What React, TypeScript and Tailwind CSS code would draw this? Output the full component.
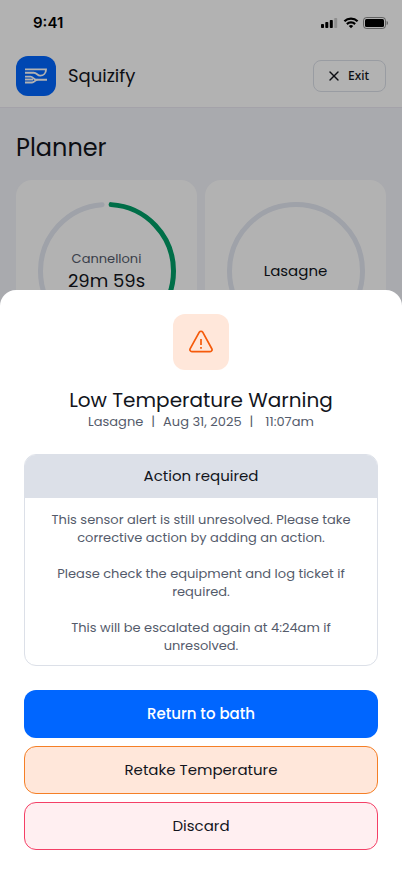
import { X } from "lucide-react";

const timers = [
  { name: "Cannelloni", remaining: "29m 59s", progress: 0.49 },
  { name: "Lasagne", remaining: null, progress: 0 },
];

const messages = [
  "This sensor alert is still unresolved. Please take corrective action by adding an action.",
  "Please check the equipment and log ticket if required.",
  "This will be escalated again at 4:24am if unresolved.",
];

export default function App() {
  return (
    <div className="min-h-screen bg-[#f3f4fa] font-[Poppins,Inter,'Noto_Sans',sans-serif] text-[#12151c]">
      <div className="border-b border-[#ebe8f2] bg-white">
        <StatusBar />
        <header className="flex h-[63px] items-center justify-between px-4">
          <div className="flex items-center gap-3">
            <div className="flex size-10 items-center justify-center rounded-xl bg-[#0066ff]">
              <Logo />
            </div>
            <span className="text-lg">Squizify</span>
          </div>
          <button type="button" className="flex h-8 items-center gap-0.5 rounded-lg border border-[#dce0e8] px-3 font-['Noto_Sans',sans-serif] text-xs font-medium">
            <X size={16} strokeWidth={2} />
            <span className="px-1">Exit</span>
          </button>
        </header>
      </div>

      <main className="px-4 pt-6">
        <h1 className="text-2xl leading-8">Planner</h1>
        <div className="mt-4 grid grid-cols-2 gap-2">
          {timers.map((timer) => (
            <TimerCard key={timer.name} {...timer} />
          ))}
        </div>
      </main>

      <div className="fixed inset-0 flex flex-col justify-end bg-black/30">
        <AlertSheet />
      </div>
    </div>
  );
}

function AlertSheet() {
  return (
    <section role="dialog" aria-labelledby="alert-title" className="flex flex-col gap-6 rounded-t-2xl bg-white p-6">
      <div className="flex flex-col items-center text-center">
        <div className="flex size-14 items-center justify-center rounded-xl bg-[#ffe7da]">
          <WarningIcon />
        </div>
        <h2 id="alert-title" className="mt-4 text-xl leading-7">Low Temperature Warning</h2>
        <p className="flex gap-2 text-[13px] leading-4 text-[#545b6b]">
          <span>Lasagne</span>
          <span>|</span>
          <span>Aug 31, 2025</span>
          <span>|</span>
          <span className="pl-1">11:07am</span>
        </p>
      </div>

      <div className="overflow-hidden rounded-xl border border-[#dce0e8] text-center">
        <h3 className="bg-[#dce0e8] pt-[7px] pb-[9px] text-[15px] leading-[27px]">Action required</h3>
        <div className="flex flex-col gap-[18px] px-5 pt-[13px] pb-[10px] text-[13px] leading-[18px] text-[#545b6b]">
          {messages.map((message) => (
            <p key={message}>{message}</p>
          ))}
        </div>
      </div>

      <div className="flex flex-col gap-2 text-[15px]">
        <button type="button" className="h-12 rounded-xl bg-[#0066ff] font-medium text-white">Return to bath</button>
        <button type="button" className="h-12 rounded-xl border border-[#f57f26] bg-[#ffe7da]">Retake Temperature</button>
        <button type="button" className="h-12 rounded-xl border border-[#f43f66] bg-[#ffeff1]">Discard</button>
      </div>
    </section>
  );
}

function TimerCard({ name, remaining, progress }: { name: string; remaining: string | null; progress: number }) {
  const done = progress * 100;
  return (
    <div className="flex justify-center rounded-2xl bg-white py-[22px]">
      <div className="grid size-[138px] place-items-center">
        <svg viewBox="0 0 138 138" fill="none" strokeWidth="5" className="col-start-1 row-start-1 size-full -rotate-90">
          {progress === 0 ? (
            <circle cx="69" cy="69" r="66.5" stroke="#e4e8f2" />
          ) : (
            <g strokeLinecap="round">
              <circle cx="69" cy="69" r="66.5" stroke="#e4e8f2" pathLength="100" strokeDasharray={`${97.6 - done} 100`} strokeDashoffset={-(done + 1.2)} />
              <circle cx="69" cy="69" r="66.5" stroke="#009e67" pathLength="100" strokeDasharray={`${done - 1} 100`} strokeDashoffset="-1" />
            </g>
          )}
        </svg>
        <div className="col-start-1 row-start-1 text-center">
          {remaining ? (
            <div className="pt-0.5">
              <p className="text-[13px] leading-[18px] text-[#545b6b]">{name}</p>
              <p className="text-lg leading-[26px]">{remaining}</p>
            </div>
          ) : (
            <p className="text-[15px]">{name}</p>
          )}
        </div>
      </div>
    </div>
  );
}

function StatusBar() {
  return (
    <div className="flex h-11 items-center justify-between pt-0.5 pr-[14px] pl-[33px] font-[Inter,sans-serif]">
      <span className="text-[15px] font-semibold text-black">9:41</span>
      <svg width="67" height="14" viewBox="0 0 67 14" fill="black">
        <rect x="0" y="8" width="3" height="4" rx="0.8" />
        <rect x="4.3" y="6" width="3" height="6" rx="0.8" />
        <rect x="8.8" y="4" width="3" height="8" rx="0.8" />
        <rect x="13.2" y="2" width="3" height="10" rx="0.8" opacity="0.2" />
        <g fill="none" stroke="black" strokeWidth="2.200">
          <path d="M23.400 5.300a9.400 9.400 0 0 1 13.200 0" />
          <path d="M25.900 8.100a5.800 5.800 0 0 1 8.200 0" />
        </g>
        <path d="M27.800 10 30 12.200l2.200-2.200a3.300 3.300 0 0 0-4.400 0z" />
        <rect x="42.500" y="1.500" width="22" height="11" rx="3" fill="none" stroke="black" opacity="0.45" />
        <rect x="44" y="3" width="19" height="8" rx="1.500" />
        <path d="M65.700 5v4c.8-.3 1.200-1.100 1.200-2s-.4-1.700-1.200-2z" opacity="0.5" />
      </svg>
    </div>
  );
}

function Logo() {
  return (
    <svg width="22" height="16" viewBox="0 0 22 16" fill="none" stroke="white" strokeWidth="1.900">
      <path d="M0 1.400h21c0 3.800-2.600 6.200-5.800 6.200-3 0-3.200-2.900-6.500-2.900H0" />
      <path d="M0 8.600h5.500c2.600 0 3 3.200 6 3.200H22" />
      <path d="M0 11.500h8" />
      <path d="M0 14.500h7c2.500 0 3-2.700 5.500-2.700" />
    </svg>
  );
}

function WarningIcon() {
  return (
    <svg width="24" height="24" viewBox="0 0 24 24" fill="none" stroke="#f55a0a" strokeWidth="1.700" strokeLinejoin="round">
      <path d="M10.300 2.200 1.200 18.700a2 2 0 0 0 1.700 3h18.200a2 2 0 0 0 1.700-3L13.700 2.200a2 2 0 0 0-3.400 0z" />
      <path d="M12 9v6M12 17v1.700" />
    </svg>
  );
}
